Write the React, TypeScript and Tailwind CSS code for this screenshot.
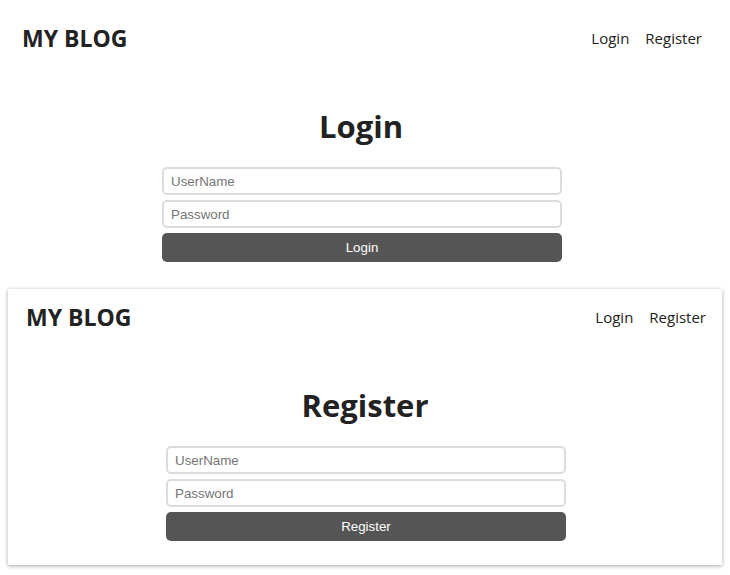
const headFont = "font-['Segoe_UI','Open_Sans','Noto_Sans',sans-serif]";

function Header() {
  return (
    <header className={`flex h-[56px] items-center justify-between pl-[18px] pr-4 text-[#222] ${headFont}`}>
      <a href="#" className="text-[23px] font-bold">
        MY BLOG
      </a>
      <nav className="flex gap-4 text-[15px]">
        <a href="#">Login</a>
        <a href="#">Register</a>
      </nav>
    </header>
  );
}

function AuthForm({ title }: { title: string }) {
  return (
    <div className="flex flex-col items-center">
      <h1 className={`mt-[38px] text-[31px] leading-[44px] font-bold text-[#222] ${headFont}`}>
        {title}
      </h1>
      <form
        className="mt-[19px] ml-[2px] flex w-[400px] flex-col gap-[5px] font-['Liberation_Sans',Arial,sans-serif] text-[13.33px]"
        onSubmit={(e) => e.preventDefault()}
      >
        <input
          type="text"
          placeholder="UserName"
          className="h-[28px] rounded-[5px] border-2 border-[#dcdcdc] px-[7px] placeholder:text-[#757575] outline-none"
        />
        <input
          type="password"
          placeholder="Password"
          className="h-[28px] rounded-[5px] border-2 border-[#dcdcdc] px-[7px] placeholder:text-[#757575] outline-none"
        />
        <button
          type="submit"
          className="h-[29px] rounded-[5px] bg-[#555] text-white"
        >
          {title}
        </button>
      </form>
    </div>
  );
}

export default function App() {
  return (
    <div className="min-h-[575px] w-[730px] bg-white pt-[10px]">
      <div className="ml-[4px] h-[276px] w-[714px]">
        <Header />
        <AuthForm title="Login" />
      </div>
      <div className="ml-[8px] mt-[3px] h-[276px] w-[714px] shadow-[0_1px_4px_rgba(0,0,0,0.35)]">
        <Header />
        <AuthForm title="Register" />
      </div>
    </div>
  );
}
